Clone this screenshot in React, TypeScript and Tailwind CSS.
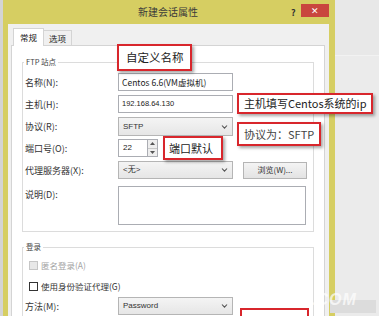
import React from "react";

const Chevron = () => (
  <svg width="7" height="4" viewBox="0 0 7 4" className="shrink-0">
    <path d="M1 0.5 L3.5 3.2 L6 0.5" fill="none" stroke="#555" strokeWidth="1.1" />
  </svg>
);

function Row({ label, children, className }: { label: string; children: React.ReactNode; className: string }) {
  return (
    <div className={`flex items-center ${className}`}>
      <div className="w-[95px] shrink-0 pl-[2px] text-[9px] text-[#333] leading-none">{label}</div>
      {children}
    </div>
  );
}

function Select({ value }: { value: string }) {
  return (
    <div className="w-[115px] h-full flex items-center justify-between border border-[#b5b5b5] bg-gradient-to-b from-[#f4f4f4] to-[#e6e6e6] pl-[4px] pr-[4px] text-[8px] text-[#333]">
      <span className="font-['Liberation_Sans','Noto_Sans_CJK_SC',sans-serif]">{value}</span>
      <Chevron />
    </div>
  );
}

export default function App() {
  return (
    <div className="relative w-[379px] h-[316px] overflow-hidden bg-[#e9e9e9] flex font-['Noto_Sans_CJK_SC',sans-serif]">
      <div className="w-[3px] shrink-0 bg-[#d4d4d4]" />
      {/* dialog */}
      <div className="w-[332px] shrink-0 h-full flex flex-col bg-[#d6ce62]">
        <div className="h-[24px] shrink-0 flex items-center">
          <div className="pl-[135px] text-[10px] text-[#3a3a3a] leading-none w-[288px]">新建会话属性</div>
          <div className="w-[10px] text-[9px] font-bold text-[#333] leading-none">?</div>
          <div className="mb-[3px] w-[28px] h-[13px] bg-[#c9463e] flex items-center justify-center text-white text-[9px] leading-none">✕</div>
        </div>
        <div className="flex-1 ml-[5px] mr-[6px] bg-[#f0f0f0] flex flex-col pt-[4px]">
          {/* tabs */}
          <div className="h-[17px] flex items-end pl-[5px] shrink-0">
            <div className="relative z-10 -mb-px w-[31px] h-[18px] bg-white border border-b-0 border-[#d4d4d4] text-[8.5px] text-[#222] flex items-center justify-center leading-none">常规</div>
            <div className="w-[28px] h-[15px] bg-[#f0f0f0] border border-l-0 border-b-0 border-[#d4d4d4] text-[8.5px] text-[#222] flex items-center justify-center leading-none">选项</div>
          </div>
          {/* panel */}
          <div className="flex-1 ml-[3px] mr-[4px] bg-white border border-[#d4d4d4] pt-[8px] px-[10px]">
            <fieldset className="border border-[#dcdcdc] pb-[6px]">
              <legend className="ml-[1px] px-[2px] text-[7.5px] leading-[16px] text-[#444]">FTP 站点</legend>
              <Row label="名称(N):" className="h-[18px] mt-[3px]">
                <div className="w-[115px] h-full border border-[#abadb3] flex items-center pl-[3px] text-[8.5px] text-[#222] whitespace-nowrap overflow-hidden">Centos 6.6(VM虚拟机)</div>
              </Row>
              <Row label="主机(H):" className="h-[18px] mt-[4px]">
                <div className="w-[115px] h-full border border-[#abadb3] flex items-center pl-[3px] text-[7.5px] text-[#222] font-['Liberation_Sans',sans-serif]">192.168.64.130</div>
              </Row>
              <Row label="协议(R):" className="h-[19px] mt-[4px]">
                <Select value="SFTP" />
              </Row>
              <Row label="端口号(O):" className="h-[18px] mt-[3px]">
                <div className="w-[30px] h-full border border-[#abadb3] flex items-center pl-[4px] text-[8px] text-[#222] font-['Liberation_Sans',sans-serif]">22</div>
                <div className="w-[10px] h-full border border-l-0 border-[#abadb3] flex flex-col">
                  <div className="flex-1 flex items-center justify-center bg-[#eeeeee] border-b border-[#c8c8c8]">
                    <svg width="5" height="3" viewBox="0 0 5 3"><path d="M0 3 L2.5 0 L5 3 Z" fill="#555" /></svg>
                  </div>
                  <div className="flex-1 flex items-center justify-center bg-[#eeeeee]">
                    <svg width="5" height="3" viewBox="0 0 5 3"><path d="M0 0 L2.5 3 L5 0 Z" fill="#555" /></svg>
                  </div>
                </div>
              </Row>
              <Row label="代理服务器(X):" className="h-[18px] mt-[4px]">
                <Select value="<无>" />
                <div className="ml-[10px] w-[64px] h-[17px] border border-[#b5b5b5] bg-gradient-to-b from-[#f4f4f4] to-[#e3e3e3] flex items-center justify-center text-[8px] text-[#333] leading-none">浏览(W)...</div>
              </Row>
              <div className="flex items-start mt-[7px] h-[39px]">
                <div className="w-[95px] shrink-0 pl-[2px] pt-[4px] text-[9px] text-[#333] leading-none">说明(D):</div>
                <div className="w-[188px] h-full border border-[#abadb3] bg-white" />
              </div>
            </fieldset>
            <fieldset className="mt-[7px] border border-[#dcdcdc] h-[100px]">
              <legend className="ml-[1px] px-[2px] text-[7.5px] leading-[16px] text-[#444]">登录</legend>
              <div className="mt-[4px] h-[12px] flex items-center pl-[6px] gap-[3px]">
                <div className="w-[9px] h-[9px] border border-[#c6c6c6] bg-[#e8e8e8]" />
                <span className="text-[8.5px] text-[#a3a3a3] leading-none">匿名登录(A)</span>
              </div>
              <div className="mt-[9px] h-[12px] flex items-center pl-[6px] gap-[3px]">
                <div className="w-[9px] h-[9px] border border-[#333] bg-white" />
                <span className="text-[8.5px] text-[#333] leading-none">使用身份验证代理(G)</span>
              </div>
              <Row label="方法(M):" className="h-[18px] mt-[5px]">
                <Select value="Password" />
              </Row>
            </fieldset>
          </div>
        </div>
      </div>
      {/* background right */}
      <div className="flex-1 flex flex-col">
        <div className="h-[55px] bg-[#e8e8e8]" />
        <div className="h-px bg-[#f2f2f2]" />
        <div className="flex-1 bg-[#ebebeb]" />
      </div>

      {/* annotations */}
      <div className="absolute left-[117px] top-[44px] w-[75px] h-[27px] bg-white border-2 border-[#d8262c] shadow-[2px_2px_3px_rgba(0,0,0,0.35)] flex items-center pl-[7px] text-[11.5px] text-[#222] leading-none whitespace-nowrap">自定义名称</div>
      <div className="absolute left-[237px] top-[93px] w-[136px] h-[21px] bg-white border-2 border-[#d8262c] shadow-[2px_2px_3px_rgba(0,0,0,0.35)] flex items-center pl-[5px] text-[11px] text-[#222] leading-none whitespace-nowrap">主机填写Centos系统的ip</div>
      <div className="absolute left-[237px] top-[122px] w-[84px] h-[24px] bg-white border-2 border-[#d8262c] shadow-[2px_2px_3px_rgba(0,0,0,0.35)] flex items-center pl-[5px] text-[11px] text-[#444] leading-none whitespace-nowrap">协议为：SFTP</div>
      <div className="absolute left-[163px] top-[136px] w-[60px] h-[24px] bg-white border-2 border-[#d8262c] shadow-[2px_2px_3px_rgba(0,0,0,0.35)] flex items-center pl-[4px] text-[11px] text-[#222] leading-none whitespace-nowrap">端口默认</div>
      <div className="absolute left-[240px] top-[308px] w-[69px] h-[14px] bg-white border-2 border-[#d8262c]" />
      <div className="absolute left-[330px] top-[300px] w-[46px] h-[13px] bg-[#dcdcdc]" />
      <div className="absolute left-[250px] top-[292px] text-[16px] italic font-bold tracking-[1px] text-white/70 leading-none font-['Liberation_Sans',sans-serif]">ASPKU.COM</div>
    </div>
  );
}
